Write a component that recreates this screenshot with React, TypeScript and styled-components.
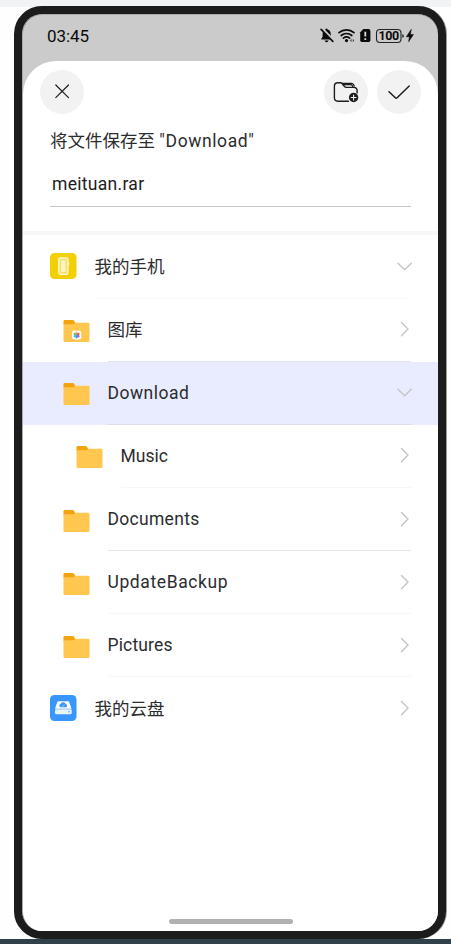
import React from "react";
import styled, { createGlobalStyle } from "styled-components";

const GlobalStyle = createGlobalStyle`
  * { box-sizing: border-box; }
  body { margin: 0; background: #fefefe; }
`;

const Page = styled.div`
  width: 451px;
  height: 944px;
  padding: 6px 0 0 14px;
  overflow: hidden;
  background: linear-gradient(#f1f3f4 0 7px, #fefefe 7px 939px, #30414b 939px);
  font-family: Roboto, "Noto Sans CJK SC", sans-serif;
  color: #2c2c2e;
`;

const Phone = styled.div`
  width: 432px;
  height: 933px;
  border: 8px solid #1c1c1c;
  border-radius: 28px;
  background: #1c1c1c;
  box-shadow: 1px 0 0 #9a9a9a;
`;

const Screen = styled.div`
  height: 917px;
  border: solid #aaa;
  border-width: 1px 0 0 1px;
  border-radius: 20px;
  overflow: hidden;
  background: #cbcbcb;
  display: flex;
  flex-direction: column;
`;

const StatusBar = styled.header`
  height: 46px;
  flex: none;
  display: flex;
  justify-content: space-between;
  padding: 11px 22px 0 24px;
`;

const Clock = styled.time`
  font-size: 17px;
  line-height: 20px;
  letter-spacing: -0.1px;
  color: #0a0a0a;
`;

const StatusIcons = styled.svg`
  width: 96px;
  height: 18px;
  margin-top: 1px;
  display: block;
`;

const Sheet = styled.main`
  flex: 1;
  background: #fff;
  border-radius: 33px 33px 0 0;
  display: flex;
  flex-direction: column;
`;

const Toolbar = styled.div`
  height: 52px;
  display: flex;
  gap: 9px;
  padding: 9px 17px 0 17px;
`;

const RoundButton = styled.button<{ $push?: boolean }>`
  width: 44px;
  height: 44px;
  padding: 0;
  border: 0;
  border-radius: 50%;
  background: #f2f2f2;
  margin-right: ${(p) => (p.$push ? "auto" : "0")};
  svg { display: block; }
`;

const Form = styled.section`
  height: 118px;
  padding: 16px 27px 0;
`;

const Title = styled.h1`
  margin: 0;
  font-size: 17.5px;
  font-weight: 400;
  line-height: 24px;
  white-space: nowrap;
`;

const Target = styled.span`
  letter-spacing: 0.6px;
`;

const FileName = styled.div`
  height: 49px;
  margin-top: 5px;
  padding: 14px 0 0 2px;
  border-bottom: 1px solid #c5c5c5;
  font-size: 17.5px;
  line-height: 24px;
  letter-spacing: 0.3px;
  color: #1c1c1e;
`;

const List = styled.div`
  border-top: 4px solid #f7f7f7;
  padding-top: 0.7px;
`;

const Row = styled.div<{ $indent: number; $selected?: boolean }>`
  height: 63.1px;
  display: flex;
  align-items: stretch;
  padding: 0 27px 0 ${(p) => 27 + p.$indent}px;
  background: ${(p) => (p.$selected ? "#e8ecfe" : "transparent")};
`;

const RowIcon = styled.svg`
  width: 27px;
  height: 28px;
  margin-top: 16.5px;
  flex: none;
`;

const RowBody = styled.div<{ $line: string }>`
  flex: 1;
  display: flex;
  justify-content: space-between;
  margin-left: 17.5px;
  border-bottom: 1px solid ${(p) => p.$line};
`;

const Label = styled.span<{ $tracking: number }>`
  margin-top: 19.2px;
  font-size: 17.5px;
  line-height: 24px;
  letter-spacing: ${(p) => p.$tracking}px;
`;

const Chevron = styled.svg`
  width: 15px;
  height: 16px;
  margin: 22.5px -0.7px 0 0;
  fill: none;
  stroke: #c5c5c7;
  stroke-width: 1.4;
  stroke-linecap: round;
  stroke-linejoin: round;
`;

const HomeIndicator = styled.div`
  width: 124px;
  height: 5px;
  margin: auto auto 7.5px 145.5px;
  border-radius: 3px;
  background: #b1b1b1;
`;

type Kind = "phone" | "gallery" | "folder" | "cloud";
interface Item {
  label: string;
  kind: Kind;
  indent: number;
  open?: boolean;
  selected?: boolean;
  line: string;
  tracking: number;
}

const items: Item[] = [
  { label: "我的手机", kind: "phone", indent: 0, open: true, line: "#f8f8f8", tracking: 0 },
  { label: "图库", kind: "gallery", indent: 13, line: "#dfe3eb", tracking: 0 },
  { label: "Download", kind: "folder", indent: 13, open: true, selected: true, line: "#dcdfe8", tracking: 0.5 },
  { label: "Music", kind: "folder", indent: 26, line: "#f7f7f7", tracking: 0 },
  { label: "Documents", kind: "folder", indent: 13, line: "#e6e6e6", tracking: 0.3 },
  { label: "UpdateBackup", kind: "folder", indent: 13, line: "#f7f7f7", tracking: 0.6 },
  { label: "Pictures", kind: "folder", indent: 13, line: "#f7f7f7", tracking: 0.15 },
  { label: "我的云盘", kind: "cloud", indent: 0, line: "transparent", tracking: 0 },
];

const petals = ["#f6b73c", "#f0556a", "#b45ad8", "#4585ee", "#35bfd8", "#62c66b"];

function ItemIcon({ kind }: { kind: Kind }) {
  if (kind === "phone")
    return (
      <RowIcon viewBox="0 0 27 28">
        <rect y="1" width="26.5" height="26" rx="4.5" fill="#f3cf05" />
        <rect x="8.7" y="5.7" width="9.3" height="16.8" rx="1.8" fill="#f9e98a" stroke="#fffbe0" strokeWidth="1.1" />
        <rect x="10.8" y="8" width="5.2" height="12.3" fill="#fdf5bd" stroke="#efd750" strokeWidth="0.6" />
        <path d="M18.8 10.3v2.7" stroke="#fffbe0" />
      </RowIcon>
    );
  if (kind === "cloud")
    return (
      <RowIcon viewBox="0 0 27 28">
        <rect y="1" width="26.5" height="26" rx="4.5" fill="#3996fc" />
        <path d="M8.8 7.2h8.9q1.2 0 1.6 1.1l2.2 6.4H5l2.2-6.4q.4-1.1 1.6-1.1Z" fill="#fff" />
        <rect x="5" y="15" width="16.7" height="5.3" rx="1.6" fill="#eaf4ff" />
        <path d="M5.5 15.5h15.7" stroke="#a5d0ff" strokeWidth="0.7" />
        <path d="M10.5 13.3a1.8 1.8 0 0 1 .1-3.4 2.8 2.8 0 0 1 5.2.2 1.7 1.7 0 0 1 .2 3.2Z" fill="#3996fc" />
        <path d="m11.8 13 2.8-2.4" stroke="#c5e1ff" strokeWidth="0.7" />
        <circle cx="19" cy="17.8" r=".7" fill="#3996fc" />
      </RowIcon>
    );
  return (
    <RowIcon viewBox="0 0 27 28">
      <path d="M.5 9V6.2Q.5 5 1.7 5h8q.8 0 1.2.6l1.2 2.2V10H.5Z" fill="#f4a30c" />
      <path d="M.5 9.300h9.800q.8 0 1.200-.800.4-.7 1.200-.7h12.500q1.300 0 1.300 1.100v16.800q0 1.300-1.300 1.300H1.800Q.5 27 .5 25.700Z" fill="#ffc650" />
      {kind === "gallery" && (
        <g>
          <rect x="9" y="15.400" width="9.200" height="9.200" rx="2.300" fill="#fff" />
          {petals.map((c, i) => (
            <ellipse key={c} cx="13.600" cy="18.300" rx="1.200" ry="1.700" fill={c} transform={`rotate(${i * 60} 13.600 20)`} />
          ))}
        </g>
      )}
    </RowIcon>
  );
}

export default function App() {
  return (
    <Page>
      <GlobalStyle />
      <Phone>
        <Screen>
          <StatusBar>
            <Clock>03:45</Clock>
            <StatusIcons viewBox="320 27 96 18" aria-hidden>
              <g fill="#0a0a0a">
                <path d="M326.5 28.500a1 1 0 0 1 1 1c2.200.500 3.200 2.200 3.200 4.200v2.500l1.900 2.700v.600H321.200v-.600l1.400-2.200v-3c0-2.200 1.200-3.700 3-4.200a1 1 0 0 1 .9-1Z" />
                <path d="M324.500 40.400h4.200q-.5 1.800-2.100 1.800t-2.100-1.800Z" />
              </g>
              <path d="m322 28.500 11.500 12" stroke="#cbcbcb" strokeWidth="2.600" />
              <path d="m321.100 29.400 11.700 12" stroke="#0a0a0a" strokeWidth="1.600" strokeLinecap="round" />
              <g fill="none" stroke="#0a0a0a" strokeWidth="1.700" strokeLinecap="round">
                <path d="M339 32.700a11.200 11.200 0 0 1 15 0" />
                <path d="M341.200 35.500a8 8 0 0 1 10.600 0" />
                <path d="M343.400 38.100a5 5 0 0 1 6.200 0" />
              </g>
              <circle cx="346.500" cy="40.600" r="1.600" fill="#0a0a0a" />
              <path d="m351.500 38.700-1.400 1.700 1.400 1.700Zm1.300 0 1.400 1.700-1.400 1.700Z" fill="#333" />
              <path d="M363.300 29h5.200q1.900 0 1.900 1.900v9.300q0 1.700-1.700 1.700h-6.800q-1.700 0-1.700-1.700v-8Z" fill="#0a0a0a" />
              <path d="M365.300 31.700v4.900M365.300 38.200v1.700" stroke="#dcdcdc" strokeWidth="1.800" />
              <rect x="376.500" y="29.500" width="24.500" height="13" rx="3.500" fill="none" stroke="#222" strokeWidth="1.100" />
              <text x="388.800" y="40.400" textAnchor="middle" fontFamily="Roboto, sans-serif" fontSize="12.500" fontWeight="700" fill="#0a0a0a" textLength="20.500">100</text>
              <path d="M402.800 34.500q1.200 1.500 0 3Z" fill="#0a0a0a" stroke="#0a0a0a" strokeWidth=".600" />
              <path d="m411.300 29.300-5 7.500h3.100l-.8 5 4.900-7.300h-3.100Z" fill="#0a0a0a" stroke="#0a0a0a" strokeWidth=".500" />
            </StatusIcons>
          </StatusBar>
          <Sheet>
            <Toolbar>
              <RoundButton $push aria-label="Close">
                <svg width="44" height="44" fill="none" stroke="#1d1d1f" strokeWidth="1.200" strokeLinecap="round">
                  <path d="m15.800 15 12.700 12.700M28.500 15 15.800 27.700" />
                </svg>
              </RoundButton>
              <RoundButton aria-label="New folder">
                <svg width="44" height="44" fill="none" stroke="#1d1d1f" strokeWidth="1.400" strokeLinecap="round" strokeLinejoin="round">
                  <path d="M24.500 31.200H13.700q-3.300 0-3.300-3.400V16.200q0-3.500 3.400-3.500h2.600q1.100 0 1.800.9l2.300 2.900q.7.900 1.900.900h7.300q3.400 0 3.400 3.200v2.300" />
                  <path d="M17.800 13.300h9.700q1.400 0 2 1.200l.8 1.600M18.800 14.700h7.700q1.300 0 1.900 1.100l.6 1.200" strokeWidth="1.200" />
                  <circle cx="29.600" cy="27.500" r="4.700" fill="#1d1d1f" stroke="none" />
                  <path d="M27.100 27.500h5M29.600 25v5" stroke="#f2f2f2" strokeWidth="1.100" />
                </svg>
              </RoundButton>
              <RoundButton aria-label="Confirm">
                <svg width="44" height="44" fill="none" stroke="#1d1d1f" strokeWidth="1.500" strokeLinecap="round" strokeLinejoin="round">
                  <path d="m12 21.800 6.300 6q.9.900 1.800 0l12.100-11.800" />
                </svg>
              </RoundButton>
            </Toolbar>
            <Form>
              <Title>
                将文件保存至 <Target>"Download"</Target>
              </Title>
              <FileName>meituan.rar</FileName>
            </Form>
            <List>
              {items.map((item) => (
                <Row key={item.label} $indent={item.indent} $selected={item.selected}>
                  <ItemIcon kind={item.kind} />
                  <RowBody $line={item.line}>
                    <Label $tracking={item.tracking}>{item.label}</Label>
                    <Chevron viewBox="0 0 15 16">
                      <path d={item.open ? "M1 5.200 7.700 11.700 14.300 5.200" : "M4.500 1.500 11 8.100 4.500 14.700"} />
                    </Chevron>
                  </RowBody>
                </Row>
              ))}
            </List>
            <HomeIndicator />
          </Sheet>
        </Screen>
      </Phone>
    </Page>
  );
}
